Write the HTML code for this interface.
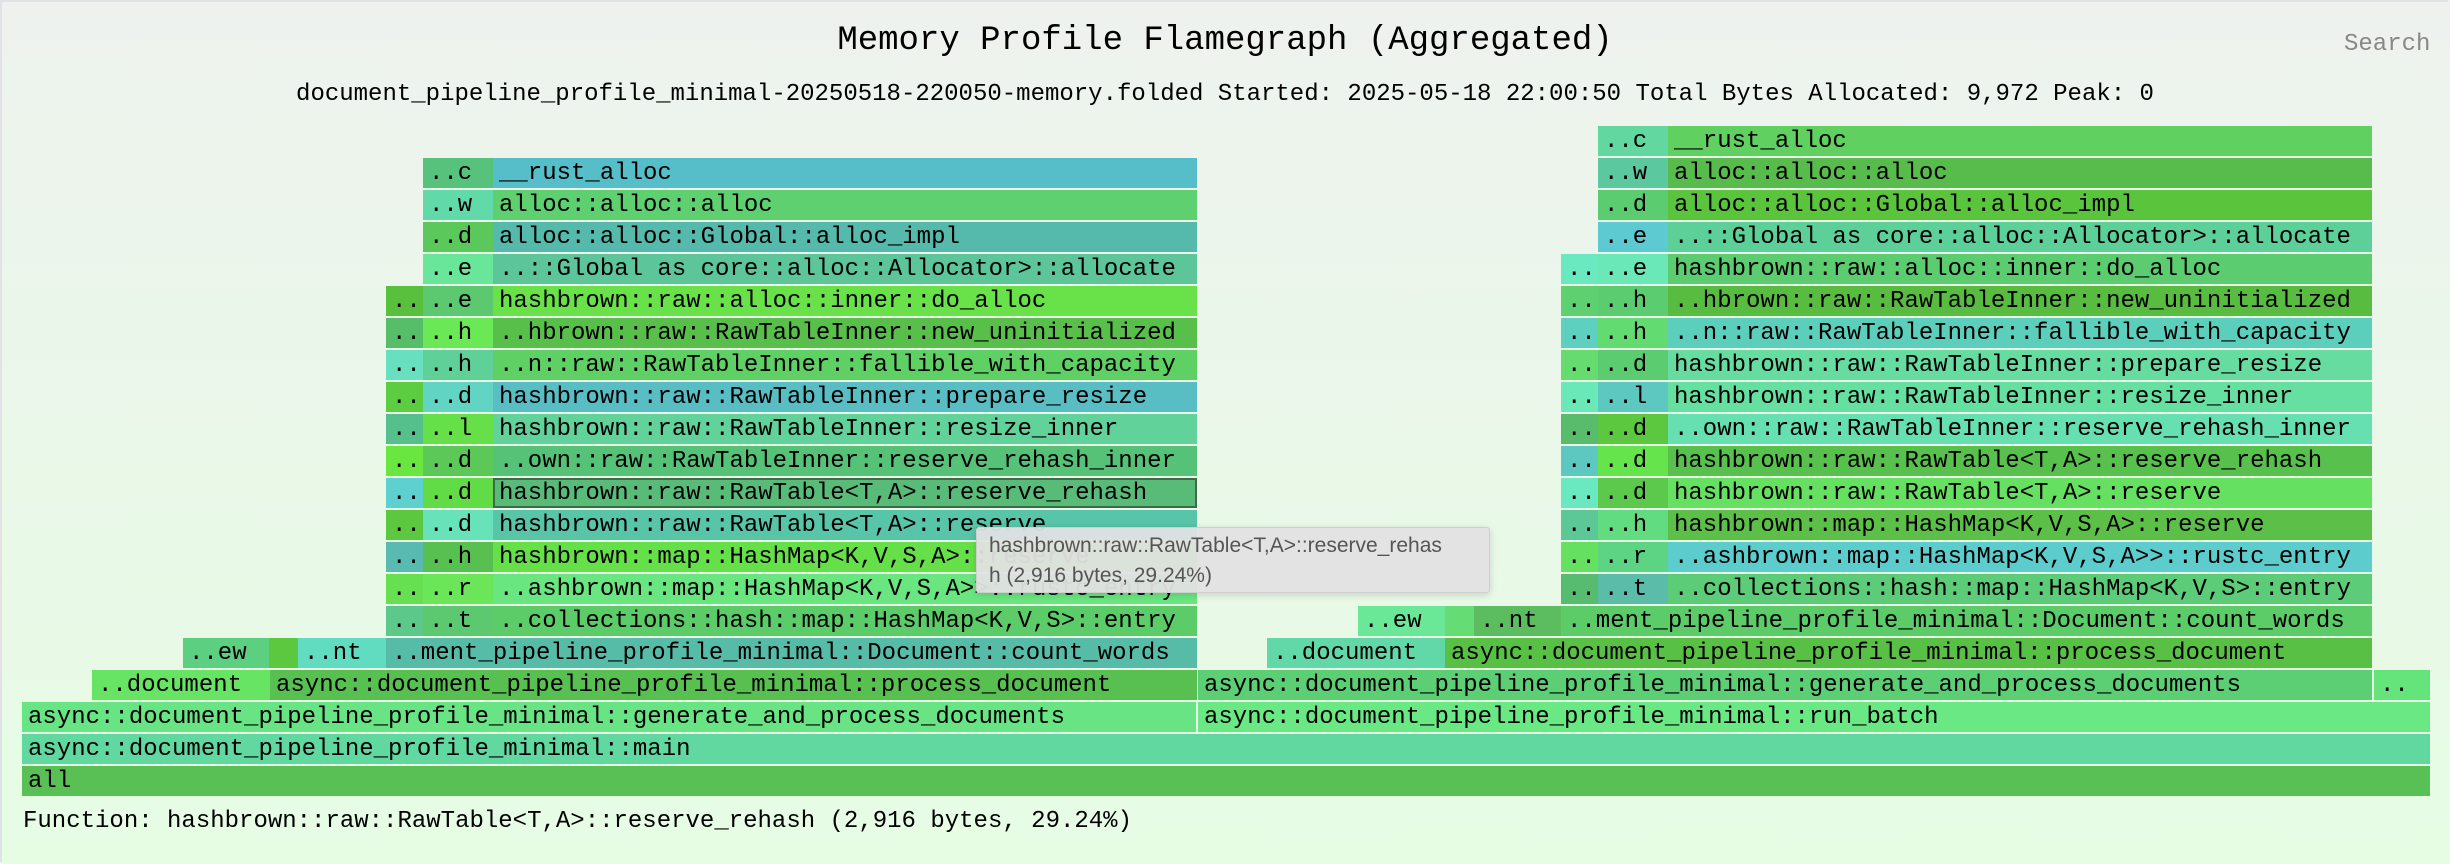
<!DOCTYPE html>
<html><head><meta charset="utf-8"><style>
html,body{margin:0;padding:0}
body{width:2450px;height:864px;position:relative;overflow:hidden;background:linear-gradient(#eef2ee,#e6fde4);font-family:"Liberation Mono",monospace;}
.bd{position:absolute;left:0;top:0;width:2446px;height:860px;border-left:2px solid #e2e2e6;border-top:2px solid #e2e2e6}
.f{position:absolute;height:30px;line-height:31px;font-size:24px;color:#000;overflow:hidden;white-space:nowrap;padding-left:6px;box-sizing:border-box}
.t{position:absolute;white-space:nowrap}
</style></head><body>
<div class="bd"></div>
<div class="t" style="left:0;width:2450px;text-align:center;top:22px;font-size:34px;">Memory Profile Flamegraph (Aggregated)</div>
<div class="t" style="left:0;width:2450px;text-align:center;top:81px;font-size:24px;">document_pipeline_profile_minimal-20250518-220050-memory.folded Started: 2025-05-18 22:00:50 Total Bytes Allocated: 9,972 Peak: 0</div>
<div class="t" style="left:2344px;top:31px;font-size:24px;color:#888">Search</div>

<!-- LEFT STACK -->
<div class="f" style="left:423px;top:158px;width:70px;background:#56c27c">..c</div>
<div class="f" style="left:493px;top:158px;width:704px;background:#56bec8">__rust_alloc</div>
<div class="f" style="left:423px;top:190px;width:70px;background:#62d9a8">..w</div>
<div class="f" style="left:493px;top:190px;width:704px;background:#5fd070">alloc::alloc::alloc</div>
<div class="f" style="left:423px;top:222px;width:70px;background:#5ac85a">..d</div>
<div class="f" style="left:493px;top:222px;width:704px;background:#55b9ab">alloc::alloc::Global::alloc_impl</div>
<div class="f" style="left:423px;top:254px;width:70px;background:#6ae69a">..e</div>
<div class="f" style="left:493px;top:254px;width:704px;background:#5cc69a">..::Global as core::alloc::Allocator&gt;::allocate</div>

<div class="f" style="left:386px;top:286px;width:37px;background:#58c03c">..</div>
<div class="f" style="left:423px;top:286px;width:70px;background:#5cc870">..e</div>
<div class="f" style="left:493px;top:286px;width:704px;background:#68e248">hashbrown::raw::alloc::inner::do_alloc</div>
<div class="f" style="left:386px;top:318px;width:37px;background:#56be68">..</div>
<div class="f" style="left:423px;top:318px;width:70px;background:#6ae856">..h</div>
<div class="f" style="left:493px;top:318px;width:704px;background:#58c04a">..hbrown::raw::RawTableInner::new_uninitialized</div>
<div class="f" style="left:386px;top:350px;width:37px;background:#68e0c0">..</div>
<div class="f" style="left:423px;top:350px;width:70px;background:#5fd098">..h</div>
<div class="f" style="left:493px;top:350px;width:704px;background:#5fd064">..n::raw::RawTableInner::fallible_with_capacity</div>
<div class="f" style="left:386px;top:382px;width:37px;background:#5ccc40">..</div>
<div class="f" style="left:423px;top:382px;width:70px;background:#62d4c4">..d</div>
<div class="f" style="left:493px;top:382px;width:704px;background:#58bec4">hashbrown::raw::RawTableInner::prepare_resize</div>
<div class="f" style="left:386px;top:414px;width:37px;background:#56c08c">..</div>
<div class="f" style="left:423px;top:414px;width:70px;background:#66e048">..l</div>
<div class="f" style="left:493px;top:414px;width:704px;background:#60d29a">hashbrown::raw::RawTableInner::resize_inner</div>
<div class="f" style="left:386px;top:446px;width:37px;background:#6ae640">..</div>
<div class="f" style="left:423px;top:446px;width:70px;background:#5cc858">..d</div>
<div class="f" style="left:493px;top:446px;width:704px;background:#56c278">..own::raw::RawTableInner::reserve_rehash_inner</div>
<div class="f" style="left:386px;top:478px;width:37px;background:#5ed0d0">..</div>
<div class="f" style="left:423px;top:478px;width:70px;background:#62dc46">..d</div>
<div class="f" style="left:493px;top:478px;width:704px;background:#58bc78;border:2px solid #3f6a4a;padding-left:4px;line-height:27px">hashbrown::raw::RawTable&lt;T,A&gt;::reserve_rehash</div>
<div class="f" style="left:386px;top:510px;width:37px;background:#5cc840">..</div>
<div class="f" style="left:423px;top:510px;width:70px;background:#68e2b8">..d</div>
<div class="f" style="left:493px;top:510px;width:704px;background:#58c4a8">hashbrown::raw::RawTable&lt;T,A&gt;::reserve</div>
<div class="f" style="left:386px;top:542px;width:37px;background:#58bab0">..</div>
<div class="f" style="left:423px;top:542px;width:70px;background:#58c050">..h</div>
<div class="f" style="left:493px;top:542px;width:704px;background:#66e048">hashbrown::map::HashMap&lt;K,V,S,A&gt;::reserve</div>
<div class="f" style="left:386px;top:574px;width:37px;background:#66e050">..</div>
<div class="f" style="left:423px;top:574px;width:70px;background:#6ae658">..r</div>
<div class="f" style="left:493px;top:574px;width:704px;background:#6ae680">..ashbrown::map::HashMap&lt;K,V,S,A&gt;&gt;::rustc_entry</div>
<div class="f" style="left:386px;top:606px;width:37px;background:#5cc88a">..</div>
<div class="f" style="left:423px;top:606px;width:70px;background:#5cc870">..t</div>
<div class="f" style="left:493px;top:606px;width:704px;background:#5ccc68">..collections::hash::map::HashMap&lt;K,V,S&gt;::entry</div>

<div class="f" style="left:183px;top:638px;width:86px;background:#5cd080">..ew</div>
<div class="f" style="left:269px;top:638px;width:29px;background:#5cc840"></div>
<div class="f" style="left:298px;top:638px;width:88px;background:#62dcc0">..nt</div>
<div class="f" style="left:386px;top:638px;width:811px;background:#56bca8">..ment_pipeline_profile_minimal::Document::count_words</div>
<div class="f" style="left:92px;top:670px;width:178px;background:#68e464">..document</div>
<div class="f" style="left:270px;top:670px;width:927px;background:#58c050">async::document_pipeline_profile_minimal::process_document</div>
<div class="f" style="left:22px;top:702px;width:1174px;background:#68e484">async::document_pipeline_profile_minimal::generate_and_process_documents</div>
<div class="f" style="left:22px;top:734px;width:2408px;background:#60d8a0">async::document_pipeline_profile_minimal::main</div>
<div class="f" style="left:22px;top:766px;width:2408px;background:#58c054">all</div>

<!-- RIGHT STACK -->
<div class="f" style="left:1598px;top:126px;width:70px;background:#62d8a0">..c</div>
<div class="f" style="left:1668px;top:126px;width:704px;background:#60d060">__rust_alloc</div>
<div class="f" style="left:1598px;top:158px;width:70px;background:#5cc8a0">..w</div>
<div class="f" style="left:1668px;top:158px;width:704px;background:#58bc4c">alloc::alloc::alloc</div>
<div class="f" style="left:1598px;top:190px;width:70px;background:#5ccc70">..d</div>
<div class="f" style="left:1668px;top:190px;width:704px;background:#5ac43c">alloc::alloc::Global::alloc_impl</div>
<div class="f" style="left:1598px;top:222px;width:70px;background:#5ccad0">..e</div>
<div class="f" style="left:1668px;top:222px;width:704px;background:#5cd098">..::Global as core::alloc::Allocator&gt;::allocate</div>

<div class="f" style="left:1561px;top:254px;width:37px;background:#6ae8c0">..</div>
<div class="f" style="left:1598px;top:254px;width:70px;background:#6ae8b8">..e</div>
<div class="f" style="left:1668px;top:254px;width:704px;background:#5ccc70">hashbrown::raw::alloc::inner::do_alloc</div>
<div class="f" style="left:1561px;top:286px;width:37px;background:#5ed070">..</div>
<div class="f" style="left:1598px;top:286px;width:70px;background:#5ccc70">..h</div>
<div class="f" style="left:1668px;top:286px;width:704px;background:#58bc40">..hbrown::raw::RawTableInner::new_uninitialized</div>
<div class="f" style="left:1561px;top:318px;width:37px;background:#5ed0c0">..</div>
<div class="f" style="left:1598px;top:318px;width:70px;background:#62dc70">..h</div>
<div class="f" style="left:1668px;top:318px;width:704px;background:#5ccfbc">..n::raw::RawTableInner::fallible_with_capacity</div>
<div class="f" style="left:1561px;top:350px;width:37px;background:#66dc70">..</div>
<div class="f" style="left:1598px;top:350px;width:70px;background:#5ccc70">..d</div>
<div class="f" style="left:1668px;top:350px;width:704px;background:#66dca0">hashbrown::raw::RawTableInner::prepare_resize</div>
<div class="f" style="left:1561px;top:382px;width:37px;background:#6ae8b8">..</div>
<div class="f" style="left:1598px;top:382px;width:70px;background:#5cc8c0">..l</div>
<div class="f" style="left:1668px;top:382px;width:704px;background:#66e0a0">hashbrown::raw::RawTableInner::resize_inner</div>
<div class="f" style="left:1561px;top:414px;width:37px;background:#58bc6c">..</div>
<div class="f" style="left:1598px;top:414px;width:70px;background:#5cc840">..d</div>
<div class="f" style="left:1668px;top:414px;width:704px;background:#66e0b0">..own::raw::RawTableInner::reserve_rehash_inner</div>
<div class="f" style="left:1561px;top:446px;width:37px;background:#5cc8c0">..</div>
<div class="f" style="left:1598px;top:446px;width:70px;background:#66e44c">..d</div>
<div class="f" style="left:1668px;top:446px;width:704px;background:#58c04c">hashbrown::raw::RawTable&lt;T,A&gt;::reserve_rehash</div>
<div class="f" style="left:1561px;top:478px;width:37px;background:#6ae8c0">..</div>
<div class="f" style="left:1598px;top:478px;width:70px;background:#5cc84c">..d</div>
<div class="f" style="left:1668px;top:478px;width:704px;background:#66e060">hashbrown::raw::RawTable&lt;T,A&gt;::reserve</div>
<div class="f" style="left:1561px;top:510px;width:37px;background:#5cc898">..</div>
<div class="f" style="left:1598px;top:510px;width:70px;background:#62dc80">..h</div>
<div class="f" style="left:1668px;top:510px;width:704px;background:#5cc048">hashbrown::map::HashMap&lt;K,V,S,A&gt;::reserve</div>
<div class="f" style="left:1561px;top:542px;width:37px;background:#66e060">..</div>
<div class="f" style="left:1598px;top:542px;width:70px;background:#5cd484">..r</div>
<div class="f" style="left:1668px;top:542px;width:704px;background:#5ccccc">..ashbrown::map::HashMap&lt;K,V,S,A&gt;&gt;::rustc_entry</div>
<div class="f" style="left:1561px;top:574px;width:37px;background:#58bc70">..</div>
<div class="f" style="left:1598px;top:574px;width:70px;background:#5cbcaa">..t</div>
<div class="f" style="left:1668px;top:574px;width:704px;background:#5ccc78">..collections::hash::map::HashMap&lt;K,V,S&gt;::entry</div>

<div class="f" style="left:1358px;top:606px;width:87px;background:#6ae898">..ew</div>
<div class="f" style="left:1445px;top:606px;width:29px;background:#66dc74"></div>
<div class="f" style="left:1474px;top:606px;width:87px;background:#5cbc60">..nt</div>
<div class="f" style="left:1561px;top:606px;width:811px;background:#5ccc68">..ment_pipeline_profile_minimal::Document::count_words</div>
<div class="f" style="left:1267px;top:638px;width:178px;background:#62d8a8">..document</div>
<div class="f" style="left:1445px;top:638px;width:927px;background:#58c044">async::document_pipeline_profile_minimal::process_document</div>
<div class="f" style="left:1198px;top:670px;width:1174px;background:#5cce74">async::document_pipeline_profile_minimal::generate_and_process_documents</div>
<div class="f" style="left:2374px;top:670px;width:56px;background:#66e47c">..</div>
<div class="f" style="left:1198px;top:702px;width:1232px;background:#6ae884">async::document_pipeline_profile_minimal::run_batch</div>

<div class="t" style="left:23px;top:808px;font-size:24px;">Function: hashbrown::raw::RawTable&lt;T,A&gt;::reserve_rehash (2,916 bytes, 29.24%)</div>

<div style="position:absolute;left:976px;top:527px;width:514px;height:66px;box-sizing:border-box;background:rgba(226,226,226,0.95);border:1px solid #cfcfcf;border-radius:3px;box-shadow:0 2px 8px rgba(0,0,0,0.15);padding:3px 0 0 12px;font-family:'Liberation Sans',sans-serif;font-size:21px;line-height:30px;color:#555;white-space:nowrap;overflow:hidden">hashbrown::raw::RawTable&lt;T,A&gt;::reserve_rehas<br>h (2,916 bytes, 29.24%)</div>
</body></html>
